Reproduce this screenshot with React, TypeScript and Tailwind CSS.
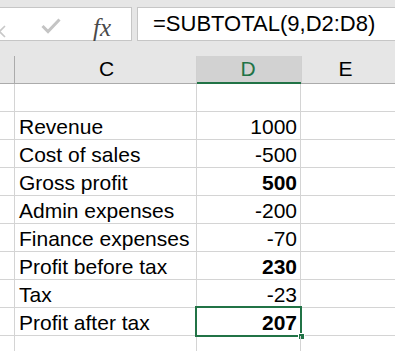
import { Fragment } from 'react';

type Row = { label: string; value: string; bold?: boolean; selected?: boolean };

const rows: Row[] = [
  { label: '', value: '' },
  { label: 'Revenue', value: '1000' },
  { label: 'Cost of sales', value: '-500' },
  { label: 'Gross profit', value: '500', bold: true },
  { label: 'Admin expenses', value: '-200' },
  { label: 'Finance expenses', value: '-70' },
  { label: 'Profit before tax', value: '230', bold: true },
  { label: 'Tax', value: '-23' },
  { label: 'Profit after tax', value: '207', bold: true, selected: true },
  { label: '', value: '' },
];

const font = { fontFamily: '"Liberation Sans", Arial, sans-serif' };

export default function App() {
  return (
    <div className="w-[395px] h-[351px] overflow-hidden bg-white text-black" style={font}>
      {/* Formula bar */}
      <div className="h-[41px] bg-[#e6e6e6] pt-[7px] flex gap-[5px]">
        <div className="ml-[-10px] w-[142px] h-[34px] shrink-0 bg-white border border-[#c6c6c6] flex items-center relative">
          <svg className="absolute left-[2px] top-[17px]" width="14" height="14" viewBox="0 0 14 14">
            <path d="M1 1 L12 12 M12 1 L1 12" stroke="#c8c8c8" strokeWidth="1.6" fill="none" />
          </svg>
          <svg className="absolute left-[50px] top-[10px]" width="20" height="16" viewBox="0 0 20 16">
            <path d="M1.5 8 L7 13.5 L18.5 1.5" stroke="#c4c4c4" strokeWidth="3" fill="none" />
          </svg>
          <span
            className="absolute left-[102px] top-[1px] text-[25px] italic text-[#4a4a4a]"
            style={{ fontFamily: '"Liberation Serif", "Times New Roman", serif' }}
          >
            fx
          </span>
        </div>
        <div className="flex-1 h-[34px] bg-white border border-r-0 border-[#c6c6c6] pl-[15px] text-[22px] leading-[32px]">
          =SUBTOTAL(9,D2:D8)
        </div>
      </div>

      {/* Column headers */}
      <div className="h-[15px] bg-[#e6e6e6]" />
      <div className="flex h-[28px] bg-[#e6e6e6] border-b border-[#ababab] text-[21px] leading-[26px]">
        <div className="w-[15px] border-r border-[#ababab]" />
        <div className="w-[182px] border-r border-[#d0d0d0] text-center pl-[2px]">C</div>
        <div className="w-[104px] bg-[#d2d2d2] border-b-2 border-[#217346] text-center text-[#217346] mb-[-1px] pr-[2px]">
          D
        </div>
        <div className="flex-1 border-l border-[#d0d0d0] text-center pr-[6px]">E</div>
      </div>

      {/* Grid */}
      <div className="grid grid-cols-[15px_182px_104px_1fr] text-[21px] leading-[23px]">
        {rows.map((r, i) => (
          <Fragment key={i}>
            <div className="h-[28px] border-r border-b border-[#d4d4d4]" />
            <div className="h-[28px] border-r border-b border-[#d4d4d4] pl-[4px] flex items-end pb-[1px] whitespace-nowrap">
              {r.label}
            </div>
            <div
              className={`h-[28px] border-r border-b border-[#d4d4d4] pr-[3px] flex items-end justify-end pb-[1px] relative ${
                r.bold ? 'font-bold' : ''
              }`}
            >
              {r.value}
              {r.selected && (
                <>
                  <div className="absolute left-[-2px] top-[-2px] right-[-2px] bottom-[-2px] border-2 border-[#217346]" />
                  <div className="absolute right-[-5px] bottom-[-5px] w-[7px] h-[7px] bg-[#217346] border border-white" />
                </>
              )}
            </div>
            <div className="h-[28px] border-b border-[#d4d4d4]" />
          </Fragment>
        ))}
      </div>
    </div>
  );
}
